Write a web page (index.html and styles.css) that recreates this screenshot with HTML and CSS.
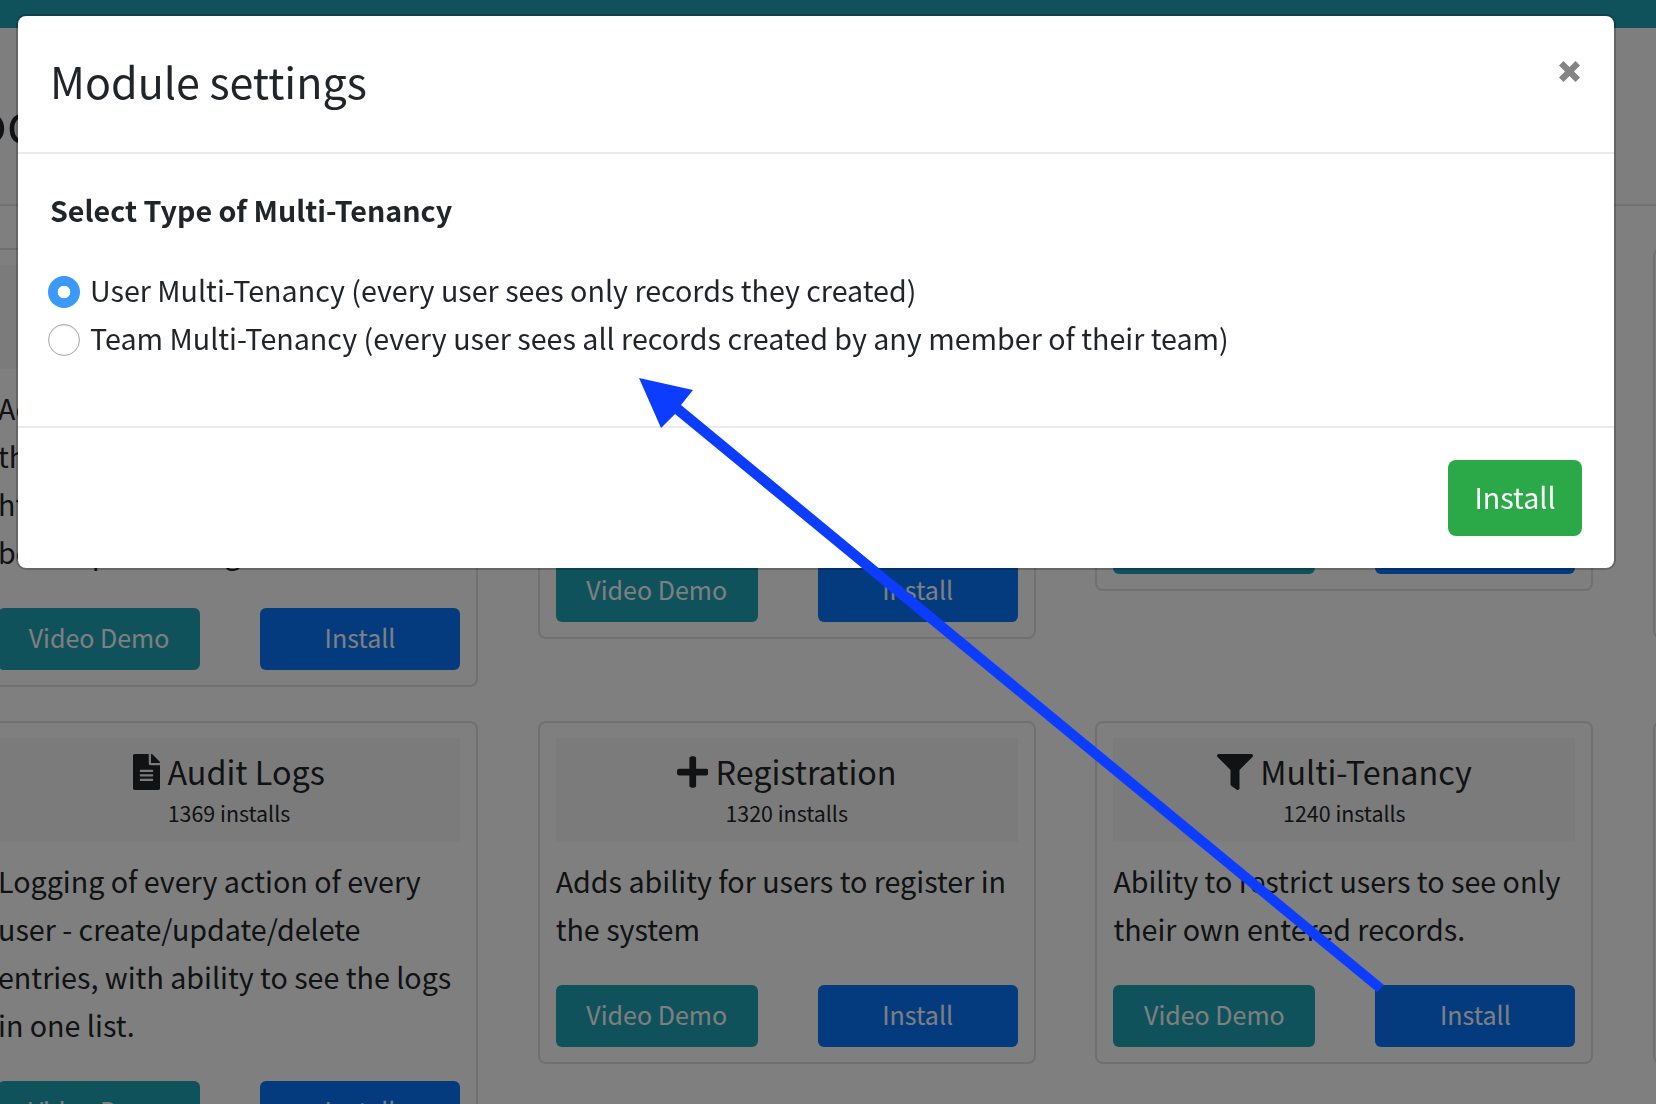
FILE: index.html
```html
<!DOCTYPE html>
<html lang="en">
<head>
<meta charset="utf-8">
<title>Module settings</title>
<link rel="stylesheet" href="styles.css">
</head>
<body>
<div class="page">
  <header class="topbar"></header>
  <div class="page-head"><h1 class="page-title">Modules</h1></div>
  <main class="grid">
    <article class="card">
      <div class="card-head"></div>
      <p class="card-text">Ad<br>th<br>ht<br>be a kept at a long</p>
      <div class="actions"><a class="btn btn-info">Video Demo</a><a class="btn btn-primary">Install</a></div>
    </article>
    <article class="card">
      <div class="card-head"></div>
      <div class="card-text lines-3"></div>
      <div class="actions"><a class="btn btn-info">Video Demo</a><a class="btn btn-primary">Install</a></div>
    </article>
    <article class="card">
      <div class="card-head"></div>
      <div class="card-text lines-2"></div>
      <div class="actions"><a class="btn btn-info">Video Demo</a><a class="btn btn-primary">Install</a></div>
    </article>
    <article class="card">
      <div class="card-head"></div>
      <div class="card-text lines-3"></div>
      <div class="actions"></div>
    </article>

    <article class="card">
      <div class="card-head">
        <h2 class="card-title">
          <svg class="icon" viewBox="0 0 384 512"><path d="M224 136V0H24C10.7 0 0 10.7 0 24v464c0 13.3 10.7 24 24 24h336c13.3 0 24-10.7 24-24V160H248c-13.2 0-24-10.8-24-24zm64 236c0 6.6-5.4 12-12 12H108c-6.6 0-12-5.4-12-12v-8c0-6.6 5.4-12 12-12h168c6.6 0 12 5.4 12 12v8zm0-64c0 6.6-5.4 12-12 12H108c-6.6 0-12-5.4-12-12v-8c0-6.6 5.4-12 12-12h168c6.6 0 12 5.4 12 12v8zm0-72v8c0 6.6-5.4 12-12 12H108c-6.6 0-12-5.4-12-12v-8c0-6.6 5.4-12 12-12h168c6.6 0 12 5.4 12 12zm96-114.1v6.1H256V0h6.1c6.4 0 12.5 2.5 17 7l97.9 98c4.5 4.5 7 10.6 7 16.9z"/></svg>
          Audit Logs
        </h2>
        <div class="card-sub">1369 installs</div>
      </div>
      <p class="card-text">Logging of every action of every user - create/update/delete entries, with ability to see the logs in one list.</p>
      <div class="actions"><a class="btn btn-info">Video Demo</a><a class="btn btn-primary">Install</a></div>
    </article>
    <article class="card">
      <div class="card-head">
        <h2 class="card-title">
          <svg class="icon" viewBox="0 0 448 512"><path d="M416 208H272V64c0-17.67-14.33-32-32-32h-32c-17.67 0-32 14.33-32 32v144H32c-17.67 0-32 14.33-32 32v32c0 17.67 14.33 32 32 32h144v144c0 17.67 14.33 32 32 32h32c17.67 0 32-14.33 32-32V304h144c17.67 0 32-14.33 32-32v-32c0-17.67-14.33-32-32-32z"/></svg>
          Registration
        </h2>
        <div class="card-sub">1320 installs</div>
      </div>
      <p class="card-text">Adds ability for users to register in the system</p>
      <div class="actions"><a class="btn btn-info">Video Demo</a><a class="btn btn-primary">Install</a></div>
    </article>
    <article class="card">
      <div class="card-head">
        <h2 class="card-title">
          <svg class="icon" viewBox="0 0 512 512"><path d="M487.976 0H24.028C2.71 0-8.047 25.866 7.058 40.971L192 225.941V432c0 7.831 3.821 15.17 10.237 19.662l80 55.98C298.02 518.69 320 507.493 320 487.98V225.941l184.947-184.97C520.021 25.896 509.338 0 487.976 0z"/></svg>
          Multi-Tenancy
        </h2>
        <div class="card-sub">1240 installs</div>
      </div>
      <p class="card-text">Ability to restrict users to see only their own entered records.</p>
      <div class="actions"><a class="btn btn-info">Video Demo</a><a class="btn btn-primary">Install</a></div>
    </article>
    <article class="card">
      <div class="card-head"></div>
      <div class="card-text lines-2"></div>
      <div class="actions"></div>
    </article>
  </main>
</div>

<div class="backdrop"></div>

<section class="modal">
  <div class="modal-header">
    <h3 class="modal-title">Module settings</h3>
    <button class="close" aria-label="Close">
      <svg viewBox="0 0 21 21"><path d="M4.500 0 10.500 6 16.500 0 21 4.500 15 10.500 21 16.500 16.500 21 10.500 15 4.500 21 0 16.500 6 10.500 0 4.500z"/></svg>
    </button>
  </div>
  <div class="modal-body">
    <div class="field-label">Select Type of Multi-Tenancy</div>
    <label class="radio"><input type="radio" name="type" checked> User Multi-Tenancy (every user sees only records they created)</label>
    <label class="radio"><input type="radio" name="type"> Team Multi-Tenancy (every user sees all records created by any member of their team)</label>
  </div>
  <div class="modal-footer"><a class="btn btn-success">Install</a></div>
</section>

<svg class="arrow" viewBox="0 0 1656 1104"><polygon points="639,378 693,390 681,405 1384,985 1377,992 675,414 661,428"/></svg>
</body>
</html>
```
FILE: styles.css
```css
* { box-sizing: border-box; }
html, body { margin: 0; height: 100%; overflow: hidden; }
body {
  background: #fff;
  color: #212529;
  font-family: "Noto Sans CJK SC", "Noto Sans", sans-serif;
  font-size: 28.65px;
  line-height: 48px;
}
.page { height: 1104px; overflow: hidden; }
.topbar { height: 28px; background: #1ea4b8; }
.page-head {
  height: 178px;
  background: #fcfdfe;
  border-bottom: 2px solid #dee2e6;
}
.page-title {
  margin: 0 0 0 -64px;
  padding-top: 56px;
  font-size: 50px;
  font-weight: 400;
  line-height: 72px;
}
.grid {
  display: grid;
  grid-template-columns: repeat(4, 498px);
  column-gap: 59.7px;
  row-gap: 34px;
  align-items: start;
  margin-left: -20px;
  padding-top: 42px;
}
.card {
  border: 2px solid #e0e0e0;
  border-radius: 8px;
  padding: 15px 16px;
}
.card-head {
  height: 104px;
  background: rgba(0,0,0,.03);
  text-align: center;
  padding-top: 6px;
}
.card-title {
  margin: 0;
  font-size: 32.3px;
  font-weight: 400;
  line-height: 54px;
}
.card-sub { font-size: 21.4px; line-height: 29px; }
.icon { width: auto; height: 36px; vertical-align: -5px; fill: currentColor; }
.card-text { margin: 15px 0 32px; }
.lines-2 { height: 96px; }
.lines-3 { height: 144px; }
.actions { display: grid; grid-template-columns: 202px 200px; justify-content: space-between; min-height: 62px; }
.btn {
  display: block;
  height: 62px;
  border-radius: 6px;
  color: #fff;
  font-size: 25px;
  line-height: 59px;
  text-align: center;
}
.btn-info { background: #1ea4b8; }
.btn-primary { background: #0877ff; }
.btn-success {
  width: 134px;
  height: 76px;
  background: #2ba948;
  border-radius: 8px;
  font-size: 28.65px;
  line-height: 74px;
}
.backdrop { position: fixed; inset: 0; background: rgba(0,0,0,.5); }
.modal {
  position: fixed;
  left: 18px;
  top: 16px;
  width: 1596px;
  height: 552px;
  background: #fff;
  border-radius: 8px;
  box-shadow: 0 0 0 2px rgba(0,0,0,.2);
  display: flex;
  flex-direction: column;
}
.modal-header {
  height: 138px;
  border-bottom: 2px solid #e9ecef;
  padding: 28px 32px 32px;
  display: flex;
  justify-content: space-between;
}
.modal-title { margin: 0; font-size: 43px; font-weight: 400; line-height: 72px; }
.close {
  width: 21px;
  height: 21px;
  margin: 17px 2px 0 0;
  padding: 0;
  border: 0;
  background: none;
  opacity: .5;
}
.close svg { display: block; width: 21px; height: 21px; fill: #0c0c0c; }
.modal-body { flex: 1; padding: 32px 30px; }
.field-label { font-weight: 700; margin: 0 0 32px 2px; }
.radio { display: flex; align-items: center; gap: 10px; height: 48px; }
.radio input {
  appearance: none;
  -webkit-appearance: none;
  flex: none;
  width: 32px;
  height: 32px;
  margin: 4px 0 0;
  border-radius: 50%;
  border: 1px solid #a8a8a8;
  background: #fff;
  box-shadow: inset 0 1px 2px rgba(0,0,0,.08);
}
.radio input:checked {
  border: 0;
  box-shadow: none;
  background: radial-gradient(circle, #fff 0 6px, #3b99fc 6.6px);
}
.modal-footer {
  height: 142px;
  border-top: 2px solid #e9ecef;
  padding: 32px;
  display: flex;
  justify-content: flex-end;
}
.arrow { position: fixed; left: 0; top: 0; width: 1656px; height: 1104px; fill: #0c3cff; pointer-events: none; }
```
